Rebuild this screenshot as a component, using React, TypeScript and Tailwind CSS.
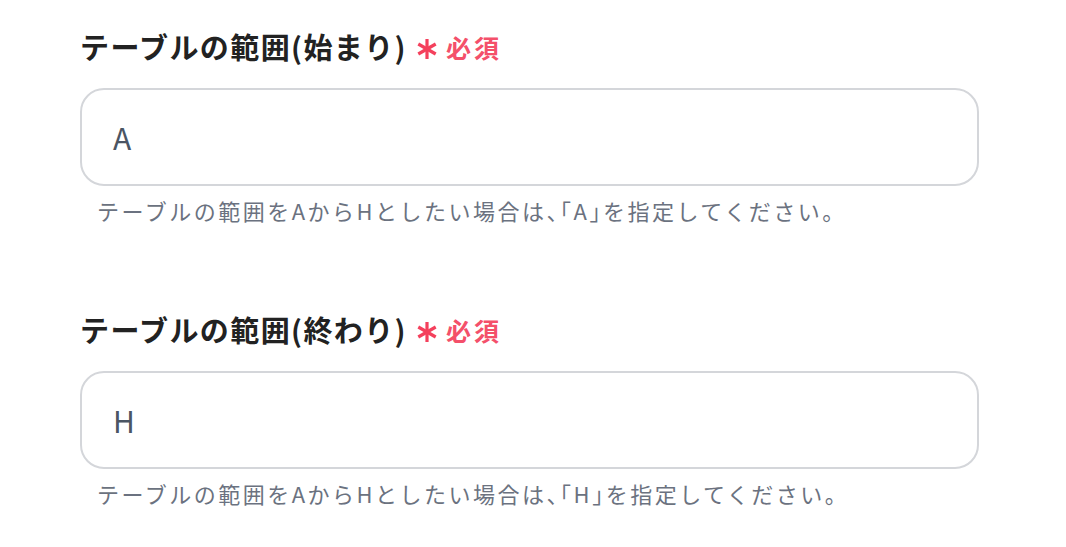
function Asterisk() {
  return (
    <svg width="22" height="22" viewBox="0 0 22 22" className="shrink-0">
      <g stroke="#f4405c" strokeWidth="3.2" strokeLinecap="butt">
        <line x1="11" y1="1" x2="11" y2="21" />
        <line x1="2.3" y1="6" x2="19.7" y2="16" />
        <line x1="2.3" y1="16" x2="19.7" y2="6" />
      </g>
    </svg>
  )
}

function Field({ label, value }: { label: string; value: string }) {
  return (
    <div className="flex flex-col">
      <div className="flex items-center h-[32px]">
        <span className="text-[29px] font-bold text-[#222222] leading-none tracking-[1.4px]">{label}</span>
        <span className="ml-[9px] mt-[6px]">
          <Asterisk />
        </span>
        <span className="ml-[8px] mt-[2px] text-[25px] font-bold text-[#f4506a] leading-none tracking-[3px]">
          必須
        </span>
      </div>
      <div className="mt-[26px] h-[98px] w-[899px] rounded-[24px] border-2 border-[#d4d6da] bg-white flex items-center px-[31px]">
        <span className="text-[30px] text-[#4b5563] leading-none">{value}</span>
      </div>
      <p className="mt-[13px] pl-[17px] text-[22px] text-[#6b7280] leading-none tracking-[2.5px]">
        テーブルの範囲をAからHとしたい場合は
        <span className="[font-feature-settings:'halt']">、「</span>
        {value}
        <span className="[font-feature-settings:'halt']">」</span>
        を指定してください。
      </p>
    </div>
  )
}

export default function App() {
  return (
    <div
      className="min-h-[547px] w-[1066px] bg-white pt-[30px] pl-[80px] flex flex-col gap-[92px]"
      style={{ fontFamily: '"Noto Sans CJK JP", "Noto Sans", sans-serif' }}
    >
      <Field label="テーブルの範囲(始まり)" value="A" />
      <Field label="テーブルの範囲(終わり)" value="H" />
    </div>
  )
}
